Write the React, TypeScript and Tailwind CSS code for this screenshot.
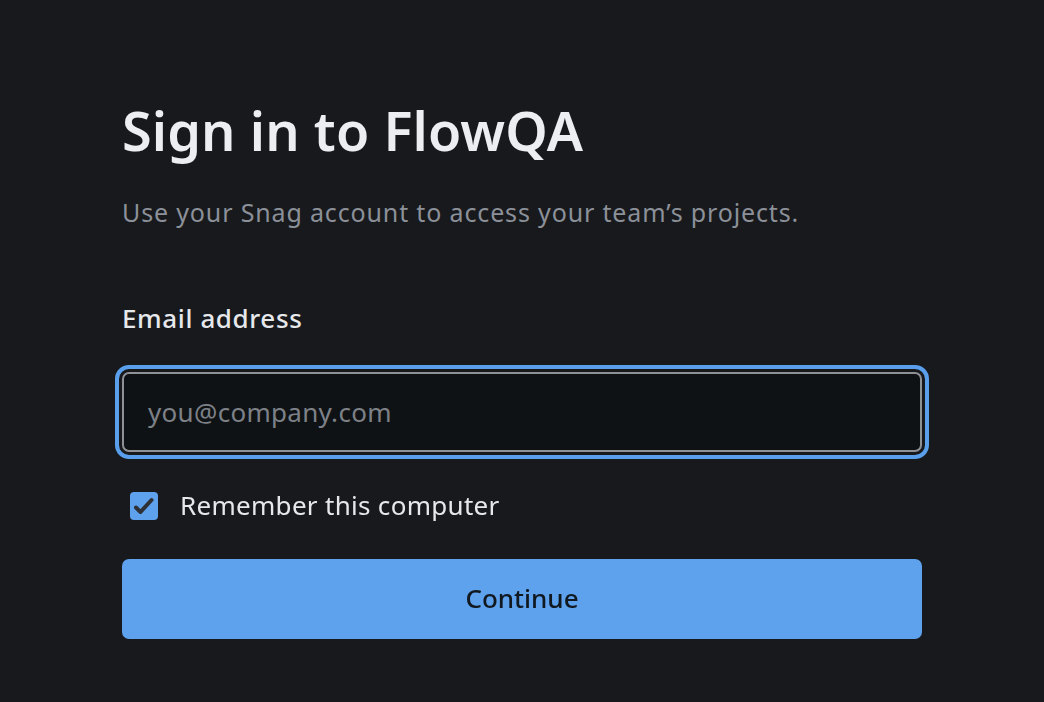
import { useState } from "react"

export default function App() {
  const [remember, setRemember] = useState(true)
  const [email, setEmail] = useState("")

  return (
    <div className="min-h-screen bg-[#18191c] font-['Noto_Sans',sans-serif]">
      <div className="w-[800px] ml-[122px] pt-[98px]">
        <h1 className="text-[54px] leading-[1.2] font-semibold text-[#eceef2] tracking-[0.1px]">Sign in to FlowQA</h1>
        <p className="mt-[33px] text-[25px] leading-[1.3] tracking-[0.85px] text-[#8b9099]">
          Use your Snag account to access your team’s projects.
        </p>

        <form className="mt-[74px]" onSubmit={(e) => e.preventDefault()}>
          <label htmlFor="email" className="block text-[26px] font-medium tracking-[0.6px] text-[#e6e8ec] leading-[1.3]">
            Email address
          </label>
          <input
            id="email"
            type="email"
            autoFocus
            value={email}
            onChange={(e) => setEmail(e.target.value)}
            placeholder="you@company.com"
            className="mt-[36px] block w-full h-[80px] rounded-[7px] border-2 border-[#8e9196] bg-[#0f1215] px-[24px] text-[26px] tracking-[0.3px] text-[#e6e8ec] placeholder:text-[#7d8187] outline-[4px] outline-solid outline-[#5a9fec] outline-offset-[3px]"
          />

          <label className="mt-[37px] flex items-center gap-[22px] cursor-pointer">
            <span className="ml-[8px] flex h-[28px] w-[28px] shrink-0 rounded-[4px] bg-[#5ea1ec]">
              <input
                type="checkbox"
                checked={remember}
                onChange={(e) => setRemember(e.target.checked)}
                className="sr-only"
              />
              {remember && (
                <svg viewBox="0 0 28 28" className="h-[28px] w-[28px]" fill="none" stroke="#2e3136" strokeWidth="4" strokeLinecap="round" strokeLinejoin="round">
                  <path d="M6 15.5l4.5 4.5L21.5 8" />
                </svg>
              )}
            </span>
            <span className="text-[26px] tracking-[0.3px] text-[#e6e8ec] leading-[1.3]">Remember this computer</span>
          </label>

          <button
            type="submit"
            className="mt-[36px] block w-full h-[80px] rounded-[7px] bg-[#5ea1ec] text-[26px] font-medium text-[#101820]"
          >
            Continue
          </button>
        </form>
      </div>
    </div>
  )
}
